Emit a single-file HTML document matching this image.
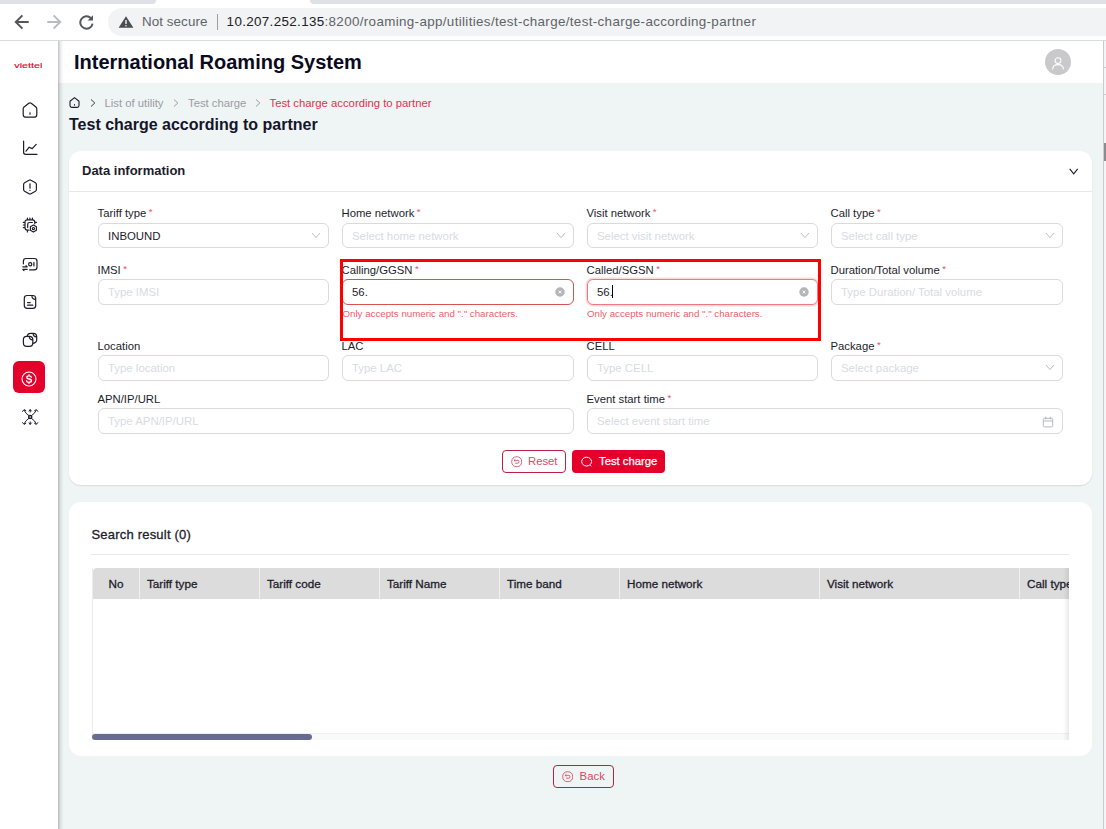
<!DOCTYPE html>
<html><head><meta charset="utf-8">
<style>
*{box-sizing:border-box;margin:0;padding:0}
html,body{width:1106px;height:829px;overflow:hidden;background:#eff4f5;font-family:"Liberation Sans",sans-serif;}
.abs{position:absolute}
#chrome{left:0;top:0;width:1106px;height:41px;background:#fff;border-bottom:1px solid #d9dcdf}
#tab1{left:0;top:0;width:156px;height:4px;background:#dee1e6;border-radius:0 0 6px 0}
#tab2{left:310px;top:0;width:796px;height:4px;background:#dee1e6;border-radius:0 0 0 6px}
#pill{left:108px;top:8px;width:1010px;height:28px;background:#f1f3f4;border-radius:14px}
#url{left:142px;top:13.4px;font-size:13.4px;color:#5f6368;white-space:nowrap;letter-spacing:0.07px;line-height:17px}
#url b{font-weight:normal;color:#202124}
#side{left:0;top:41px;width:58px;height:788px;background:#fff}
#sideshadow{left:58px;top:41px;width:6px;height:788px;background:linear-gradient(to right,rgba(40,50,60,0.30),rgba(40,50,60,0.10) 40%,rgba(40,50,60,0.03) 75%,rgba(40,50,60,0))}
#hdr{left:58px;top:41px;width:1046px;height:42px;background:#fff}
#title{left:74px;top:51px;font-size:20px;font-weight:bold;color:#0b0b1f;white-space:nowrap}
.card{background:#fff;border-radius:12px;box-shadow:0 1px 1.5px rgba(0,0,0,.10)}
.lbl{font-size:11.3px;line-height:13px;color:#1d1d2c;white-space:nowrap}
.lbl i{color:#ee4d66;font-style:normal;margin-left:2.5px;font-size:9.5px;position:relative;top:-1.5px}
.inp{height:26px;width:231px;border:1px solid #d8dadc;border-radius:6px;background:#fff;font-size:11.4px;color:#d7dce3;line-height:24px;padding-left:9px;white-space:nowrap}
.inp.v{color:#1d1d2c}
.inp.e{border-color:#d4524f}
.inp.f{border-color:#ec7a7c;box-shadow:0 0 0 1.5px rgba(245,90,100,0.22)}
.err{font-size:9.72px;color:#ea5f69;white-space:nowrap;line-height:11px}
.th{position:absolute;top:0;height:31px;line-height:32px;font-size:11.7px;color:#1d1d2c;border-right:1px solid #f0f0f0;padding-left:7px;white-space:nowrap;overflow:hidden;-webkit-text-stroke:0.3px #1d1d2c}

.bc{font-size:11.3px;line-height:14px;white-space:nowrap}
#ptitle{left:69px;top:115px;font-size:16px;font-weight:bold;color:#15152a;white-space:nowrap;line-height:19px}
.btn{height:23px;border-radius:4px;font-size:11.3px;line-height:21px;white-space:nowrap}
.btn span{position:absolute;top:0}
.btn.o{border:1px solid #bb2040;color:#dc4a63;background:transparent}
.btn.p{background:#e4002b;color:#fff;line-height:23px;-webkit-text-stroke:0.25px #fff}
#sr{left:91.5px;top:527px;letter-spacing:0.2px;font-size:13px;color:#1d1d2c;-webkit-text-stroke:0.3px #1d1d2c;white-space:nowrap;line-height:15px}
#tbl{left:92px;top:568px;width:977px;height:166px;overflow:hidden;border-left:1px solid #ececee}
#thead{position:absolute;left:0;top:0;width:977px;border-radius:4px 0 0 0;height:31px;background:#dcdcdc}
.caret{display:inline-block;width:1px;height:13px;background:#000;vertical-align:-2px;margin-left:-1.3px}

#url2{left:226.6px;top:13.4px;letter-spacing:0.345px;font-size:13.4px;color:#5f6368;white-space:nowrap;line-height:17px}
#url2 b{font-weight:normal;color:#202124}
</style></head><body>
<!-- browser chrome -->
<div id="chrome" class="abs"></div>
<div id="tab1" class="abs"></div><div id="tab2" class="abs"></div>
<div id="pill" class="abs"></div>
<div id="url" class="abs">Not secure</div>
<!-- app -->
<div id="hdr" class="abs"></div>
<div id="side" class="abs"></div>
<div id="sideshadow" class="abs"></div>
<div id="title" class="abs">International Roaming System</div>

<!-- breadcrumb -->
<svg class="abs" style="left:68px;top:96px" width="13" height="13" viewBox="0 0 13 13"><path d="M2 5.2 L6.5 1.6 L11 5.2 V9.6 Q11 11.4 9.2 11.4 H3.8 Q2 11.4 2 9.6 Z" fill="none" stroke="#1d1d2c" stroke-width="1.1" stroke-linejoin="round"/><path d="M6.5 8.2V9.6" stroke="#1d1d2c" stroke-width="1.1"/></svg>
<div class="abs bc" style="left:104.5px;top:96px;color:#9a9ca3">List of utility</div>
<div class="abs bc" style="left:188px;top:96px;color:#9a9ca3">Test charge</div>
<div class="abs bc" style="left:269.5px;top:96px;color:#e0334f">Test charge according to partner</div>
<svg class="abs" style="left:88px;top:98px" width="10" height="10" viewBox="0 0 10 10"><path d="M3 1.5 L6.8 5 L3 8.5" fill="none" stroke="#3a3a48" stroke-width="1"/></svg>
<svg class="abs" style="left:171px;top:98px" width="10" height="10" viewBox="0 0 10 10"><path d="M3 1.5 L6.8 5 L3 8.5" fill="none" stroke="#9a9ca3" stroke-width="1"/></svg>
<svg class="abs" style="left:253px;top:98px" width="10" height="10" viewBox="0 0 10 10"><path d="M3 1.5 L6.8 5 L3 8.5" fill="none" stroke="#9a9ca3" stroke-width="1"/></svg>
<div class="abs" id="ptitle">Test charge according to partner</div>

<!-- card 1 -->
<div class="abs card" style="left:69px;top:151px;width:1023px;height:334px"></div>
<div class="abs" style="left:82px;top:163px;font-size:13px;font-weight:bold;color:#1d1d2c">Data information</div>
<div class="abs" style="left:69px;top:191px;width:1023px;height:1px;background:#e6e8ea"></div>
<svg class="abs" style="left:1067px;top:166px" width="12" height="10" viewBox="0 0 12 10"><path d="M2.7 2.8 L6.7 7.8 L10.7 2.8" fill="none" stroke="#1d1d2c" stroke-width="1.1"/></svg>
<div class="abs lbl" style="left:97.5px;top:206.6px">Tariff type<i>*</i></div>
<div class="abs lbl" style="left:341.5px;top:206.6px">Home network<i>*</i></div>
<div class="abs lbl" style="left:586.5px;top:206.6px">Visit network<i>*</i></div>
<div class="abs lbl" style="left:830.5px;top:206.6px">Call type<i>*</i></div>
<div class="abs inp v" style="left:98px;top:223px;width:231px;height:25px">INBOUND</div><svg class="abs" style="left:311px;top:232px" width="10" height="7" viewBox="0 0 10 7"><path d="M1 1 L5 5.6 L9 1" fill="none" stroke="#b4b6bc" stroke-width="0.9"/></svg>
<div class="abs inp " style="left:342px;top:223px;width:232px;height:25px">Select home network</div><svg class="abs" style="left:556px;top:232px" width="10" height="7" viewBox="0 0 10 7"><path d="M1 1 L5 5.6 L9 1" fill="none" stroke="#b4b6bc" stroke-width="0.9"/></svg>
<div class="abs inp " style="left:587px;top:223px;width:231px;height:25px">Select visit network</div><svg class="abs" style="left:800px;top:232px" width="10" height="7" viewBox="0 0 10 7"><path d="M1 1 L5 5.6 L9 1" fill="none" stroke="#b4b6bc" stroke-width="0.9"/></svg>
<div class="abs inp " style="left:831px;top:223px;width:232px;height:25px">Select call type</div><svg class="abs" style="left:1045px;top:232px" width="10" height="7" viewBox="0 0 10 7"><path d="M1 1 L5 5.6 L9 1" fill="none" stroke="#b4b6bc" stroke-width="0.9"/></svg>
<div class="abs lbl" style="left:97.5px;top:263.6px">IMSI<i>*</i></div>
<div class="abs lbl" style="left:341.5px;top:263.6px">Calling/GGSN<i>*</i></div>
<div class="abs lbl" style="left:586.5px;top:263.6px">Called/SGSN<i>*</i></div>
<div class="abs lbl" style="left:830.5px;top:263.6px">Duration/Total volume<i>*</i></div>
<div class="abs inp " style="left:98px;top:279px;width:231px">Type IMSI</div>
<div class="abs inp v e" style="left:342px;top:279px;width:232px">56.</div><svg class="abs" style="left:554.5px;top:287.3px" width="10" height="10" viewBox="0 0 10 10"><circle cx="5" cy="5" r="4.7" fill="#b5b5b7"/><path d="M3.6 3.6L6.4 6.4M6.4 3.6L3.6 6.4" stroke="#fff" stroke-width="0.9"/></svg>
<div class="abs inp v e f" style="left:587px;top:279px;width:231px">56.<span class="caret"></span></div><svg class="abs" style="left:799px;top:287.3px" width="10" height="10" viewBox="0 0 10 10"><circle cx="5" cy="5" r="4.7" fill="#b5b5b7"/><path d="M3.6 3.6L6.4 6.4M6.4 3.6L3.6 6.4" stroke="#fff" stroke-width="0.9"/></svg>
<div class="abs inp " style="left:831px;top:279px;width:232px">Type Duration/ Total volume</div>
<div class="abs err" style="left:342.5px;top:308px">Only accepts numeric and "." characters.</div>
<div class="abs err" style="left:587px;top:308px">Only accepts numeric and "." characters.</div>
<div class="abs lbl" style="left:97.5px;top:339.6px">Location</div>
<div class="abs lbl" style="left:341.5px;top:339.6px">LAC</div>
<div class="abs lbl" style="left:586.5px;top:339.6px">CELL</div>
<div class="abs lbl" style="left:830.5px;top:339.6px">Package<i>*</i></div>
<div class="abs inp " style="left:98px;top:355px;width:231px">Type location</div>
<div class="abs inp " style="left:342px;top:355px;width:232px">Type LAC</div>
<div class="abs inp " style="left:587px;top:355px;width:231px">Type CELL</div>
<div class="abs inp " style="left:831px;top:355px;width:232px">Select package</div><svg class="abs" style="left:1045px;top:364px" width="10" height="7" viewBox="0 0 10 7"><path d="M1 1 L5 5.6 L9 1" fill="none" stroke="#b4b6bc" stroke-width="0.9"/></svg>
<div class="abs lbl" style="left:97.5px;top:392.6px">APN/IP/URL</div>
<div class="abs lbl" style="left:586.5px;top:392.6px">Event start time<i>*</i></div>
<div class="abs inp " style="left:98px;top:408px;width:476px">Type APN/IP/URL</div>
<div class="abs inp " style="left:587px;top:408px;width:476px">Select event start time</div><svg class="abs" style="left:1042px;top:416px" width="12" height="12" viewBox="0 0 12 12"><rect x="1.3" y="2.3" width="9.4" height="8.6" rx="1.2" fill="none" stroke="#adb0b6" stroke-width="0.9"/><path d="M1.3 5H10.7M3.8 0.8V3.4M8.2 0.8V3.4" stroke="#adb0b6" stroke-width="0.9"/></svg>
<div class="abs" style="left:340px;top:259px;width:481px;height:82px;border:3px solid #ff0000"></div>
<div class="abs btn o" style="left:502px;top:450px;width:64px"><svg width="11.4" height="11.4" viewBox="0 0 12 12" style="position:absolute;left:7.6px;top:5.2px"><rect x="0.8" y="0.8" width="10.4" height="10.4" rx="4.6" fill="none" stroke="#dc4a63" stroke-width="0.9"/><path d="M3.4 4.6H7.2Q8.4 4.6 8.4 6Q8.4 7.6 7.2 7.6H4.4M4.6 3.4L3.3 4.6L4.6 5.8" fill="none" stroke="#dc4a63" stroke-width="0.9"/></svg><span style="left:25px">Reset</span></div>
<div class="abs btn p" style="left:572px;top:450px;width:93px"><svg width="12" height="12" viewBox="0 0 12 12" style="position:absolute;left:9px;top:6px"><ellipse cx="5.6" cy="5.6" rx="4.9" ry="4.4" fill="none" stroke="#fff" stroke-width="1"/><path d="M9.2 9L10.4 10.2" stroke="#fff" stroke-width="1"/></svg><span style="left:27px">Test charge</span></div>
<div class="abs card" style="left:69px;top:502px;width:1023px;height:254px;box-shadow:none"></div>
<div class="abs" id="sr">Search result (0)</div>
<div class="abs" style="left:91px;top:554px;width:978px;height:1px;background:#e6e8ea"></div>
<div class="abs" id="tbl">
<div id="thead">
<div class="th" style="left:0;width:47px;padding-left:15.5px">No</div>
<div class="th" style="left:47px;width:120px">Tariff type</div>
<div class="th" style="left:167px;width:120px">Tariff code</div>
<div class="th" style="left:287px;width:120px">Tariff Name</div>
<div class="th" style="left:407px;width:120px">Time band</div>
<div class="th" style="left:527px;width:200px">Home network</div>
<div class="th" style="left:727px;width:200px">Visit network</div>
<div class="th" style="left:927px;width:60px;border:0">Call type</div>
</div>
</div>
<div class="abs" style="left:92px;top:733px;width:977px;height:7px;background:#f9fafa;border-top:1px solid #efeff1"></div>
<div class="abs" style="left:92px;top:734px;width:220px;height:6px;background:#676b90;border-radius:3px"></div>
<div class="abs" style="left:1063px;top:568px;width:6px;height:172px;background:linear-gradient(to right,rgba(0,0,0,0),rgba(0,0,0,0.08))"></div>
<div class="abs btn o" style="left:553px;top:765px;width:61px"><svg width="11.4" height="11.4" viewBox="0 0 12 12" style="position:absolute;left:7.6px;top:5.2px"><rect x="0.8" y="0.8" width="10.4" height="10.4" rx="4.6" fill="none" stroke="#dc4a63" stroke-width="0.9"/><path d="M3.4 4.6H7.2Q8.4 4.6 8.4 6Q8.4 7.6 7.2 7.6H4.4M4.6 3.4L3.3 4.6L4.6 5.8" fill="none" stroke="#dc4a63" stroke-width="0.9"/></svg><span style="left:25.5px;letter-spacing:0.1px">Back</span></div>
<div class="abs" style="left:1103px;top:41px;width:1px;height:788px;background:#c9cccf"></div>
<div class="abs" style="left:1104px;top:41px;width:2px;height:788px;background:#f3f5f6"></div>
<div class="abs" style="left:1104px;top:143px;width:2px;height:18px;background:#8a8c8f"></div>

<!-- chrome icons -->
<svg class="abs" style="left:13px;top:14px" width="17" height="16" viewBox="0 0 17 16" fill="none" stroke="#54585c" stroke-width="2"><path d="M15.7 8H3.2M9.4 1.4L2.8 8L9.4 14.6"/></svg>
<svg class="abs" style="left:46px;top:14px" width="17" height="16" viewBox="0 0 17 16" fill="none" stroke="#babcbe" stroke-width="2"><path d="M1.3 8H13.8M7.6 1.4L14.2 8L7.6 14.6"/></svg>
<svg class="abs" style="left:78px;top:14px" width="17" height="16" viewBox="0 0 17 16" fill="none" stroke="#54585c" stroke-width="2"><path d="M13 4.2A6.2 6.2 0 1 0 14.6 9.6"/><path d="M15 1.2V6.6H9.6Z" fill="#54585c" stroke="none"/></svg>
<svg class="abs" style="left:118px;top:16px" width="16" height="12" viewBox="0 0 16 12"><path d="M8 0.3L15.4 11.7H0.6Z" fill="#4a4d51"/><path d="M8 4V8" stroke="#f1f3f4" stroke-width="1.4"/><circle cx="8" cy="9.8" r="0.8" fill="#f1f3f4"/></svg>
<div class="abs" style="left:217px;top:14px;width:1px;height:16px;background:#9aa0a6"></div>
<div class="abs" id="url2"><b>10.207.252.135</b>:8200/roaming-app/utilities/test-charge/test-charge-according-partner</div>
<!-- logo -->
<svg class="abs" style="left:12px;top:56px" width="34" height="16" viewBox="0 0 34 16"><text x="2.3" y="12.1" textLength="28" lengthAdjust="spacingAndGlyphs" font-family="Liberation Sans, sans-serif" font-size="7.6" font-weight="normal" stroke="#e4002b" stroke-width="0.12" fill="#e4002b">viettel</text></svg>
<svg class="abs" style="left:21.0px;top:101.0px" width="18" height="18" viewBox="0 0 18 18" fill="none" stroke="#1d1d2c" stroke-width="1.2" stroke-linecap="round" stroke-linejoin="round"><path d="M2.2 7.8 Q2.2 6.7 3.1 6 L7.8 2.3 Q9 1.4 10.2 2.3 L14.9 6 Q15.8 6.7 15.8 7.8 V13.4 Q15.8 16.2 13 16.2 H5 Q2.2 16.2 2.2 13.4 Z"/><path d="M9 11.8V13.2"/></svg>
<svg class="abs" style="left:21.0px;top:139.0px" width="18" height="18" viewBox="0 0 18 18" fill="none" stroke="#1d1d2c" stroke-width="1.2" stroke-linecap="round" stroke-linejoin="round"><path d="M2.6 2.2V13.3Q2.6 15.3 4.6 15.3H16"/><path d="M5 12.2L8.2 8.2L11.2 9.6L15.2 5.4"/></svg>
<svg class="abs" style="left:21.0px;top:178.0px" width="18" height="18" viewBox="0 0 18 18" fill="none" stroke="#1d1d2c" stroke-width="1.2" stroke-linecap="round" stroke-linejoin="round"><path d="M8 2.2Q9 1.6 10 2.2L14.4 4.7Q15.4 5.3 15.4 6.4V11.6Q15.4 12.7 14.4 13.3L10 15.8Q9 16.4 8 15.8L3.6 13.3Q2.6 12.7 2.6 11.6V6.4Q2.6 5.3 3.6 4.7Z"/><path d="M9 5.8V10.2M9 12.4V12.5"/></svg>
<svg class="abs" style="left:21.0px;top:216.0px" width="18" height="18" viewBox="0 0 18 18" fill="none" stroke="#1d1d2c" stroke-width="1.2" stroke-linecap="round" stroke-linejoin="round"><path d="M8 14.2H6.4Q4 14.2 4 11.8V6.2Q4 3.8 6.4 3.8H11.4Q13.8 3.8 13.8 6.2V7.8"/><path d="M6.7 11.6V8.3Q6.7 6.5 8.5 6.5H11.4"/><path d="M6.4 2.1V3.3M8.9 2.1V3.3M11.4 2.1V3.3M2.3 6.4H3.5M2.3 9H3.5M2.3 11.6H3.5M6.4 14.7V15.9M14.3 6.3H15.5"/><path d="M12.4 9.1L15.4 10.85V14.35L12.4 16.1L9.4 14.35V10.85Z"/><circle cx="12.4" cy="12.6" r="1.1"/></svg>
<svg class="abs" style="left:21.0px;top:255.0px" width="18" height="18" viewBox="0 0 18 18" fill="none" stroke="#1d1d2c" stroke-width="1.2" stroke-linecap="round" stroke-linejoin="round"><path d="M2.4 8.8V6.2Q2.4 3.5 5.1 3.5H13.3Q16 3.5 16 6.2V12.2Q16 14.9 13.3 14.9H8.6"/><circle cx="9.2" cy="9.2" r="1.6"/><path d="M12.9 7.5V10.9"/><path d="M1.8 11.8H6.2L5 10.6M6.2 14.4H1.8L3 15.6"/></svg>
<svg class="abs" style="left:21.0px;top:293.0px" width="18" height="18" viewBox="0 0 18 18" fill="none" stroke="#1d1d2c" stroke-width="1.2" stroke-linecap="round" stroke-linejoin="round"><path d="M6.2 2.5H11.8Q14.7 2.5 14.7 5.4V12.4Q14.7 15.3 11.8 15.3H6.2Q3.3 15.3 3.3 12.4V5.4Q3.3 2.5 6.2 2.5Z"/><path d="M10.9 2.7Q10.9 6.2 14.5 6.3"/><path d="M6.6 9.6H9.2M6.6 12.2H11.8"/></svg>
<svg class="abs" style="left:21.0px;top:331.0px" width="18" height="18" viewBox="0 0 18 18" fill="none" stroke="#1d1d2c" stroke-width="1.2" stroke-linecap="round" stroke-linejoin="round"><path d="M6.2 5.2Q6.6 2.3 9.6 2.3H12.2Q15.7 2.3 15.7 5.8V8.8Q15.7 11.8 12 12.3"/><path d="M12.1 2.5Q12.2 5.7 15.5 5.9"/><path d="M5.6 5.3H8.4Q11.8 5.3 11.8 8.7V12Q11.8 15.3 8.5 15.3H5.7Q2.4 15.3 2.4 12V8.6Q2.4 5.3 5.6 5.3Z"/><path d="M8.3 5.5Q8.4 8.7 11.6 8.9"/></svg>
<div class="abs" style="left:13px;top:361px;width:32px;height:32px;border-radius:6px;background:#e4002b"></div>
<svg class="abs" style="left:20px;top:369.6px" width="18" height="18" viewBox="0 0 18 18" fill="none" stroke="#fff" stroke-width="1.1" stroke-linecap="round"><circle cx="9" cy="9" r="7"/><path stroke-width="1.35" d="M11.3 7.2Q11 5.8 9 5.8Q6.8 5.8 6.8 7.4Q6.8 8.7 9 9Q11.4 9.3 11.4 10.8Q11.4 12.3 9 12.3Q6.9 12.3 6.6 10.8M9 4.8V5.8M9 12.3V13.3"/></svg>
<svg class="abs" style="left:21.0px;top:408.0px" width="18" height="18" viewBox="0 0 18 18" fill="none" stroke="#1d1d2c" stroke-width="1.2" stroke-linecap="round" stroke-linejoin="round"><circle cx="9.2" cy="9" r="1.55" stroke-width="1.5"/><path d="M7.8 7.6Q4.6 5.6 3.2 2.4M10.6 7.6Q13.8 5.6 15.2 2.4M7.8 10.4Q4.6 12.4 3.2 15.6M10.6 10.4Q13.8 12.4 15.2 15.6" stroke-width="1"/><path d="M1.6 3.4L3 1.6L4.8 2.6M13.6 2.6L15.4 1.6L16.8 3.4M8 3L9.2 1.6L10.4 3M9.2 1.8V4M1.6 14.6L3 16.4L4.8 15.4M13.6 15.4L15.4 16.4L16.8 14.6M8 15L9.2 16.4L10.4 15M9.2 14V16.2" stroke-width="1"/></svg>
<div class="abs" style="left:1045px;top:49px;width:26px;height:26px;border-radius:13px;background:#c9c9cb"></div>
<svg class="abs" style="left:1050px;top:54.5px" width="16" height="17" viewBox="0 0 16 17" fill="none" stroke="#fff" stroke-width="1.05"><circle cx="8" cy="5.6" r="2.9"/><path d="M2.6 14.6Q2.6 9.6 8 9.6Q13.4 9.6 13.4 14.6"/></svg>
<div class="abs" style="left:1104px;top:67px;width:2px;height:1px;background:#c9cccf"></div><div class="abs" style="left:1104px;top:94px;width:2px;height:1px;background:#c9cccf"></div>
</body></html>
